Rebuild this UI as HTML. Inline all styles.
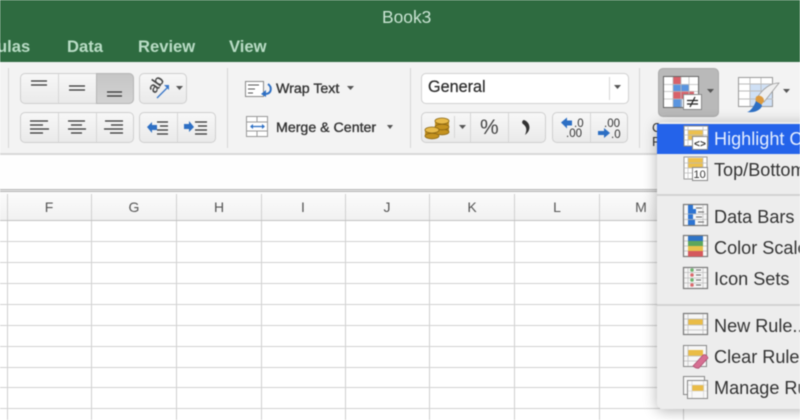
<!DOCTYPE html>
<html><head><meta charset="utf-8">
<style>
html,body{margin:0;padding:0;width:800px;height:420px;overflow:hidden;background:#fff}
#p{position:relative;width:800px;height:420px;overflow:hidden;font-family:"Liberation Sans",sans-serif;filter:blur(.45px)}
#p div{position:absolute;white-space:nowrap}
.btn{background:linear-gradient(#f7f7f7,#eaeaea);border:1px solid #cfcfcf;border-radius:5px;box-sizing:border-box}
.sep{width:1px;background:#d6d6d6}
.gh{width:1px;background:#d0d0d0;top:194px;height:226px}
.gv{left:0;width:660px;height:1px;background:#d2d2d2}
.hd{top:199px;font-size:14px;color:#555;width:20px;text-align:center}
.tab{top:37px;font-size:16.6px;font-weight:bold;color:#b9dcc5}
.mi{left:714px;font-size:18.1px;color:#333}
.rb{font-size:14.2px;color:#333;-webkit-text-stroke:.35px #333}
svg{position:absolute;overflow:visible}
</style></head><body><div id="p">
<div style="left:0;top:0;width:800px;height:62px;background:#2e6b40"></div>
<div style="left:382px;top:7px;font-size:17.4px;color:#c9e3d2">Book3</div>
<div class="tab" style="left:-3px">ulas</div>
<div class="tab" style="left:67px">Data</div>
<div class="tab" style="left:138px">Review</div>
<div class="tab" style="left:229px">View</div>

<div style="left:0;top:62px;width:800px;height:92px;background:#f3f3f3"></div>
<div style="left:0;top:153px;width:800px;height:2px;background:#d9d9d9"></div>
<div style="left:0;top:155px;width:800px;height:33px;background:#fefefe"></div>
<div style="left:0;top:189px;width:800px;height:1px;background:#b5b5b5"></div>
<div style="left:0;top:190px;width:800px;height:1px;background:#e8e8e8"></div>
<div style="left:0;top:191px;width:800px;height:1px;background:#b5b5b5"></div>
<div style="left:0;top:192px;width:800px;height:28px;background:linear-gradient(#fcfcfc,#f1f1f1)"></div>
<div class="sep" style="left:8px;top:68px;height:80px"></div>
<div class="sep" style="left:227px;top:68px;height:80px"></div>
<div class="sep" style="left:410px;top:68px;height:80px"></div>
<div class="sep" style="left:639px;top:68px;height:80px"></div>

<!-- Alignment buttons -->
<div class="btn" style="left:20px;top:73px;width:114px;height:31px"></div>
<div style="left:96px;top:73px;width:38px;height:31px;background:linear-gradient(#c6c6c6,#d2d2d2);border-radius:0 5px 5px 0;border:1px solid #b5b5b5;box-sizing:border-box"></div>
<div class="sep" style="left:58px;top:74px;height:29px"></div>
<div class="btn" style="left:139px;top:73px;width:48px;height:31px"></div>
<div class="btn" style="left:20px;top:112px;width:114px;height:31px"></div>
<div class="sep" style="left:58px;top:113px;height:29px"></div>
<div class="sep" style="left:96px;top:113px;height:29px"></div>
<div class="btn" style="left:139px;top:112px;width:77px;height:31px"></div>
<div class="sep" style="left:177px;top:113px;height:29px"></div>

<!-- Number -->
<div style="left:421px;top:73px;width:208px;height:31px;background:#fff;border:1px solid #d0d0d0;border-radius:5px;box-sizing:border-box"></div>
<div class="sep" style="left:609px;top:77px;height:23px"></div>
<div style="left:428px;top:78px;font-size:16.2px;color:#2a2a2a;-webkit-text-stroke:.2px #2a2a2a">General</div>
<div class="btn" style="left:421px;top:112px;width:125px;height:31px"></div>
<div class="sep" style="left:470px;top:113px;height:29px"></div>
<div class="sep" style="left:508px;top:113px;height:29px"></div>
<div class="sep" style="left:454px;top:116px;height:22px"></div>
<div class="btn" style="left:552px;top:112px;width:76px;height:31px"></div>
<div class="sep" style="left:590px;top:113px;height:29px"></div>
<div style="left:480px;top:116px;font-size:21px;color:#444">%</div>

<!-- CF button -->
<div style="left:658px;top:68px;width:61px;height:49px;background:#b9b9b9;border:1px solid #aaa;border-radius:5px;box-sizing:border-box"></div>
<div style="left:652px;top:120px;font-size:13px;color:#333">C</div>
<div style="left:652px;top:134px;font-size:13px;color:#333">F</div>

<div class="rb" style="left:276px;top:81px">Wrap Text</div>
<div class="rb" style="left:276px;top:120px">Merge &amp; Center</div>

<svg style="left:0;top:0" width="800" height="420">
<g stroke="#333" stroke-width="1.3" fill="none">
<path d="M31 81h16M31 85h16M69 86h16M69 90h16M107 92h15M107 96h15"/>
<path d="M30 121h18M30 125h13M30 129h19M30 133h13"/>
<path d="M68 121h17M71 125h11M68 129h18M71 133h11"/>
<path d="M105 121h18M111 125h12M104 129h19M110 133h13"/>
<path d="M157 122h11M160 126h8M157 130h11M157 134h11"/>
<path d="M195 122h12M198 126h9M195 130h12M195 134h12"/>
</g>
<path d="M147 127l5-5v3h5v5h-5v3z" fill="#2d6fc4"/>
<path d="M194 127l-5 5v-3h-5v-5h5v-3z" fill="#2d6fc4"/>
<path d="M157 98l11-11" stroke="#3b78c9" stroke-width="1.3"/><path d="M164 85h5v5z" fill="#3b78c9"/>
<path d="M176 86h7l-3.500 4zM347 86h7l-3.500 4zM387 125h6l-3 4zM459 125h7l-3.500 4zM614 85h7l-3.500 4zM707 89h7l-3.500 4zM783 89h7l-3.500 4z" fill="#555"/>
<text transform="translate(155,94) rotate(-55)" font-family="Liberation Sans" font-size="15" fill="#444" stroke="#444" stroke-width=".3">ab</text>

<!-- wrap -->
<rect x="245.500" y="81.500" width="18" height="15" fill="#fff" stroke="#888"/>
<path d="M248 85h11M248 89h7M248 93h5" stroke="#555" fill="none"/>
<path d="M268 84c4 3 4 9-2 10" stroke="#2d6fc4" stroke-width="2" fill="none"/><path d="M261 94l5-4v7z" fill="#2d6fc4"/>
<!-- merge -->
<rect x="246.500" y="116.500" width="21" height="20" fill="#fff" stroke="#999"/>
<path d="M246 122h22M246 131h22M257 116v6M257 131v6" stroke="#999" fill="none"/>
<path d="M251 126.500h12" stroke="#2d6fc4" stroke-width="1.300"/><path d="M250 126.500l3-2.500v5zM265 126.500l-3-2.500v5z" fill="#2d6fc4"/>

<!-- coins -->
<g fill="#c4921f" stroke="#8a6512" stroke-width=".8">
<rect x="435" y="121" width="14" height="11" stroke="none"/><ellipse cx="442" cy="132" rx="7" ry="2.800"/><ellipse cx="442" cy="127" rx="7" ry="2.800"/><ellipse cx="442" cy="121" rx="7" ry="3" fill="#e8bb4a"/>
<rect x="425" y="131" width="14" height="5" stroke="none"/><ellipse cx="432" cy="136" rx="7" ry="2.800"/><ellipse cx="432" cy="130" rx="7" ry="3" fill="#e8bb4a"/>
</g>
<path d="M524 120c6 2 8 10 1 15c2-5 2-8-2-11c-2-2 0-4 1-4z" fill="#333"/>
<path d="M561 122.500l6-5v3h5v5h-5v3z" fill="#2d6fc4"/>
<path d="M610 133l-6 5v-3h-6v-4h6v-3z" fill="#2d6fc4"/>
<text x="574" y="127" font-family="Liberation Sans" font-size="11.500" fill="#333">.0</text>
<text x="566" y="137" font-family="Liberation Sans" font-size="11.500" fill="#333">.00</text>
<text x="604" y="127" font-family="Liberation Sans" font-size="11.500" fill="#333">.00</text>
<text x="611" y="138" font-family="Liberation Sans" font-size="11.500" fill="#333">.0</text>

<!-- CF icon -->
<rect x="663.500" y="76.500" width="35" height="31" fill="#fff" stroke="#666"/>
<rect x="673" y="77" width="8" height="8" fill="#d9616a"/><rect x="673" y="84" width="16" height="7" fill="#5a95e0"/><rect x="673" y="91" width="21" height="8" fill="#d9616a"/><rect x="673" y="99" width="9" height="8" fill="#5a95e0"/>
<path d="M664 84.500h34M664 91.500h34M664 99h34M673 77v30M681 77v30M689 77v30" stroke="#bbb" stroke-width=".8" fill="none"/>
<rect x="683.500" y="94.500" width="18" height="15" fill="#fff" stroke="#888"/>
<path d="M687 100.500h11M687 104h11M695 97l-5 10" stroke="#222" stroke-width="1.200"/>
<!-- format as table -->
<rect x="738.500" y="77.500" width="34" height="29" fill="#fff" stroke="#999"/>
<rect x="750" y="84" width="22" height="22" fill="#cfe0f5"/>
<path d="M739 84h34M739 91h34M739 99h34M750 78v28M761 78v28" stroke="#bbb" fill="none" stroke-width=".9"/>
<path d="M757 98c6-10 14-15 22-15l-15 19z" fill="#eee" stroke="#999" stroke-width=".8"/>
<path d="M756 97c2-3 8-1 8 4c-2 4-5 6-7 5c-1-3-2-6-1-9z" fill="#dc9a3e"/>
<path d="M747 112c4-1 7-6 9-11c2 2 6 3 6 5c-2 5-9 7-15 6z" fill="#2d6fc4"/>
</svg>

<!-- grid -->
<div class="gh" style="left:7px"></div><div class="gh" style="left:91px"></div><div class="gh" style="left:176px"></div><div class="gh" style="left:261px"></div><div class="gh" style="left:345px"></div><div class="gh" style="left:429px"></div><div class="gh" style="left:514px"></div><div class="gh" style="left:599px"></div><div class="gh" style="left:683px"></div>
<div class="gv" style="top:220px;background:#c2c2c2"></div><div class="gv" style="top:241px"></div><div class="gv" style="top:262px"></div><div class="gv" style="top:283px"></div><div class="gv" style="top:304px"></div><div class="gv" style="top:325px"></div><div class="gv" style="top:346px"></div><div class="gv" style="top:367px"></div><div class="gv" style="top:387px"></div><div class="gv" style="top:408px"></div>
<div class="hd" style="left:39px">F</div><div class="hd" style="left:124px">G</div><div class="hd" style="left:209px">H</div><div class="hd" style="left:293px">I</div><div class="hd" style="left:377px">J</div><div class="hd" style="left:462px">K</div><div class="hd" style="left:547px">L</div><div class="hd" style="left:631px">M</div>

<!-- Menu -->
<div style="left:657px;top:122px;width:160px;height:287px;background:#ededed;border-radius:6px;box-shadow:0 2px 14px rgba(0,0,0,.3)"></div>
<div style="left:657px;top:124px;width:143px;height:30px;background:#2463ea"></div>
<div style="left:657px;top:194px;width:143px;height:2px;background:#d2d2d2"></div>
<div style="left:657px;top:304px;width:143px;height:2px;background:#d2d2d2"></div>
<div class="mi" style="top:129px;color:#e4eeff">Highlight Cells Rules</div>
<div class="mi" style="top:160px">Top/Bottom Rules</div>
<div class="mi" style="top:207px">Data Bars</div>
<div class="mi" style="top:238px">Color Scales</div>
<div class="mi" style="top:269px">Icon Sets</div>
<div class="mi" style="top:316px">New Rule...</div>
<div class="mi" style="top:347px">Clear Rules</div>
<div class="mi" style="top:378px">Manage Rules...</div>
<svg style="left:0;top:0" width="800" height="420">
<!-- highlight -->
<rect x="684" y="126" width="24" height="20" fill="#fff" stroke="#888"/><rect x="688" y="130" width="15" height="10" fill="#ecc04e"/>
<path d="M688 126v20M703 126v20M684 130h24M684 135h24M684 140h24" stroke="#bbb" stroke-width=".7"/>
<rect x="692.500" y="136.500" width="15" height="13" fill="#fff" stroke="#888"/>
<text x="694" y="147" font-family="Liberation Mono" font-size="10" font-weight="bold" fill="#333">&lt;&gt;</text>
<!-- top -->
<rect x="684" y="157" width="23" height="22" fill="#fff" stroke="#999"/><rect x="688" y="158" width="15" height="10" fill="#ecc04e"/>
<path d="M684 163h23M684 168h23M684 173h23M688 157v22M703 157v22" stroke="#bbb" stroke-width=".7"/>
<rect x="692.500" y="167.500" width="15" height="13" fill="#fff" stroke="#888"/>
<text x="693.500" y="178" font-family="Liberation Sans" font-size="11" fill="#333">10</text>
<!-- data bars -->
<rect x="683.500" y="204.500" width="24" height="21" fill="#f6f6f6" stroke="#777" stroke-width="1.200"/>
<path d="M688 205h5v4h3v5h-3v5h2v6h-7z" fill="#2d74d2"/>
<path d="M684 214h23M684 219.500h23M703 205v20" stroke="#bbb" stroke-width=".7"/>
<path d="M696 208h6M698 212h6M696 217h6M698 222h6" stroke="#666"/>
<!-- color scales -->
<rect x="683.500" y="235.500" width="24" height="21" fill="#f6f6f6" stroke="#777" stroke-width="1.200"/>
<rect x="688" y="236" width="15" height="5" fill="#2f74c6"/><rect x="688" y="241" width="15" height="5" fill="#5da65c"/><rect x="688" y="246" width="15" height="5" fill="#e7c24c"/><rect x="688" y="251" width="15" height="5.500" fill="#d4595d"/>
<path d="M684 241h4M684 246h4M684 251h4M703 241h4M703 246h4M703 251h4" stroke="#bbb" stroke-width=".7"/>
<!-- icon sets -->
<rect x="683.500" y="267.500" width="24" height="21" fill="#f6f6f6" stroke="#777" stroke-width="1.200"/>
<path d="M684 272.500h23M684 278h23M684 283h23M688 268v20M703 268v20" stroke="#bbb" stroke-width=".7"/>
<circle cx="692" cy="270" r="1.800" fill="#6cb36c"/><circle cx="692" cy="275" r="1.800" fill="#d9686c"/><circle cx="692" cy="280" r="1.800" fill="#6cb36c"/><circle cx="692" cy="285" r="1.800" fill="#d9686c"/>
<path d="M696 270h5M696 275h5M696 280h5M696 285h5" stroke="#666"/>
<!-- new rule -->
<rect x="683.500" y="313.500" width="24" height="21" fill="#f6f6f6" stroke="#777" stroke-width="1.200"/><rect x="688" y="319" width="15" height="6" fill="#eabc46"/>
<path d="M684 319h23M684 325h23M684 330h23M688 314v20M703 314v20" stroke="#bbb" stroke-width=".7"/>
<!-- clear -->
<rect x="683.500" y="345.500" width="23" height="21" fill="#f6f6f6" stroke="#888"/><rect x="688" y="350" width="15" height="6" fill="#eabc46"/>
<path d="M684 356h22M684 361h22M688 346v20" stroke="#bbb" stroke-width=".7"/>
<path d="M693 366l10-11c2-1 4 0 5 3l-9 10c-2 1-5-1-6-2z" fill="#d66f92" stroke="#a84a6c" stroke-width=".7"/>
<!-- manage -->
<rect x="683.500" y="376.500" width="21" height="18" fill="#f6f6f6" stroke="#888"/>
<rect x="687.500" y="380.500" width="20" height="18" fill="#f8f8f8" stroke="#888"/><rect x="692" y="385" width="12" height="6" fill="#eabc46"/>
<path d="M688 385h19M688 391h19M692 381v17M703.500 381v17" stroke="#ccc" stroke-width=".6"/>
</svg>
</div></body></html>
